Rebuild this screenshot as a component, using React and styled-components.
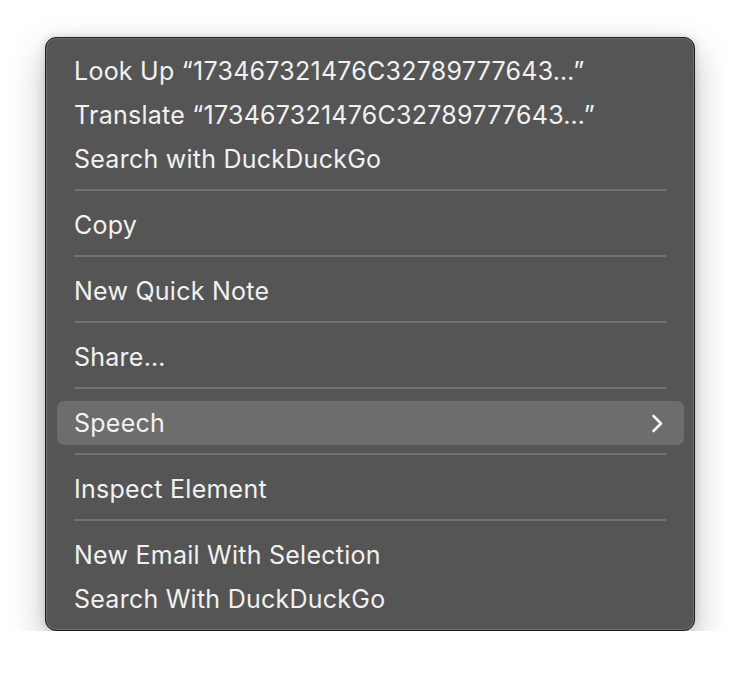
import React from "react";
import styled, { createGlobalStyle } from "styled-components";

const Global = createGlobalStyle`
  html, body { margin: 0; padding: 0; background: #ffffff; }
  body { font-family: Inter, "Noto Sans", sans-serif; }
`;

const Page = styled.div`
  padding: 37px 0 0 45px;
`;

const Menu = styled.div`
  box-sizing: border-box;
  width: 650px;
  height: 594px;
  background: #555555;
  border: 1px solid #1c1c1c;
  border-radius: 11px;
  box-shadow: inset 0 0 0 1px #6f6f6f, 0 14px 36px rgba(0, 0, 0, 0.26), 0 0 8px rgba(0, 0, 0, 0.14);
  padding: 11px 0 9px;
  display: flex;
  flex-direction: column;
`;

const Item = styled.div`
  height: 44px;
  margin: 0 10px 0 11px;
  padding: 0 21px 0 17px;
  border-radius: 7px;
  display: flex;
  align-items: center;
  justify-content: space-between;
  background: ${(p) => (p.$active ? "#6d6d6d" : "transparent")};
  color: #f1f1f1;
  font-size: 25px;
  letter-spacing: 0.25px;
  white-space: nowrap;
`;

const Sep = styled.div`
  height: 22px;
  display: flex;
  align-items: flex-start;
  padding: 8px 28px 0;
  box-sizing: border-box;
  &::after {
    content: "";
    flex: 1;
    height: 2px;
    background: #727272;
  }
`;

const Chevron = () => (
  <svg width="12" height="19" viewBox="0 0 12 19" fill="none">
    <path d="M2.5 2 L10 9.5 L2.5 17" stroke="#f3f3f3" strokeWidth="2.6" strokeLinecap="round" strokeLinejoin="round" />
  </svg>
);

const NUM = "173467321476C32789777643";

const groups = [
  [
    `Look Up \u201C${NUM}\u2026\u201D`,
    `Translate \u201C${NUM}\u2026\u201D`,
    "Search with DuckDuckGo",
  ],
  ["Copy"],
  ["New Quick Note"],
  ["Share\u2026"],
  [{ label: "Speech", sub: true, active: true }],
  ["Inspect Element"],
  ["New Email With Selection", "Search With DuckDuckGo"],
];

export default function App() {
  return (
    <>
      <Global />
      <Page>
        <Menu>
          {groups.map((g, gi) => (
            <React.Fragment key={gi}>
              {gi > 0 && <Sep />}
              {g.map((it, i) => {
                const o = typeof it === "string" ? { label: it } : it;
                return (
                  <Item key={i} $active={o.active}>
                    <span>{o.label}</span>
                    {o.sub && <Chevron />}
                  </Item>
                );
              })}
            </React.Fragment>
          ))}
        </Menu>
      </Page>
    </>
  );
}
